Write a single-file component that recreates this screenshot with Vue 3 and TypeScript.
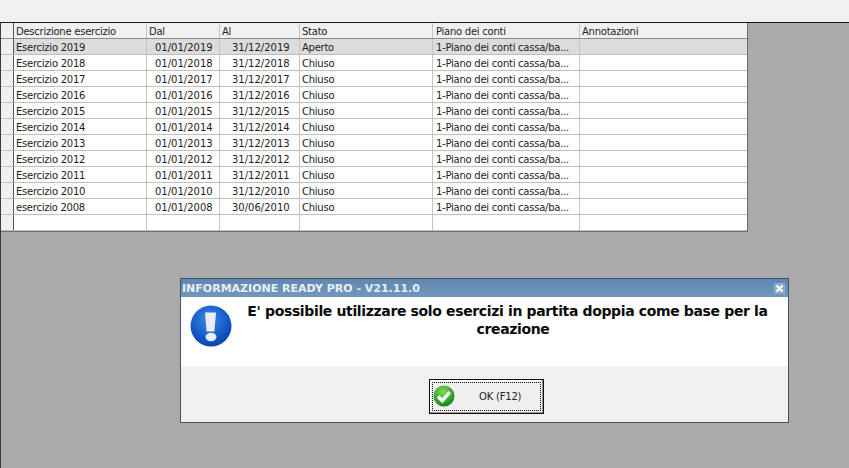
<script setup lang="ts">
interface Row { name: string; from: string; to: string; state: string; plan: string }
const years = [2019, 2018, 2017, 2016, 2015, 2014, 2013, 2012, 2011, 2010]
const plan = '1-Piano dei conti cassa/ba...'
const rows: Row[] = years.map((y, i) => ({
  name: `Esercizio ${y}`,
  from: `01/01/${y}`,
  to: `31/12/${y}`,
  state: i === 0 ? 'Aperto' : 'Chiuso',
  plan,
}))
rows.push({ name: 'esercizio 2008', from: '01/01/2008', to: '30/06/2010', state: 'Chiuso', plan })
rows.push({ name: '', from: '', to: '', state: '', plan: '' })
</script>

<template>
  <div class="page">
    <div class="topbar"></div>
    <div class="desk">
      <div class="grid">
        <div class="row head">
          <div class="ind"></div>
          <div class="c c1">Descrizione esercizio</div>
          <div class="c c2">Dal</div>
          <div class="c c3">Al</div>
          <div class="c c4">Stato</div>
          <div class="c c5">Piano dei conti</div>
          <div class="c c6">Annotazioni</div>
        </div>
        <div v-for="(r, i) in rows" :key="i" class="row" :class="{ sel: i === 0 }">
          <div class="ind"></div>
          <div class="c c1">{{ r.name }}</div>
          <div class="c c2 date">{{ r.from }}</div>
          <div class="c c3 date">{{ r.to }}</div>
          <div class="c c4">{{ r.state }}</div>
          <div class="c c5">{{ r.plan }}</div>
          <div class="c c6"></div>
        </div>
      </div>

      <div class="dialog">
        <div class="title">
          <span>INFORMAZIONE READY PRO - V21.11.0</span>
          <span class="close">
            <svg width="9" height="9" viewBox="0 0 9 9"><path d="M1.5 1.5l6 6M7.5 1.5l-6 6" stroke="#fff" stroke-width="2.2" fill="none" /></svg>
          </span>
        </div>
        <div class="body">
          <svg class="info" width="42" height="42" viewBox="0 0 42 42">
            <defs>
              <radialGradient id="blue" cx="45%" cy="35%" r="70%">
                <stop offset="0" stop-color="#3a8ae8" />
                <stop offset="0.7" stop-color="#0f55c4" />
                <stop offset="1" stop-color="#0a3f9c" />
              </radialGradient>
            </defs>
            <circle cx="21" cy="21" r="20.5" fill="url(#blue)" />
            <path d="M15 7.5h11l-1.6 19h-7.8z" fill="#e9eef8" />
            <ellipse cx="21" cy="32" rx="5.5" ry="4.2" fill="#e9eef8" />
          </svg>
          <div class="msg">
            <p class="line">E' possibile utilizzare solo esercizi in partita doppia come base per la</p>
            <p class="line second">creazione</p>
          </div>
        </div>
        <div class="foot">
          <button class="ok" type="button">
            <span class="focus">
              <svg class="check" width="22" height="22" viewBox="0 0 22 22">
                <defs>
                  <radialGradient id="green" cx="45%" cy="30%" r="75%">
                    <stop offset="0" stop-color="#7ed957" />
                    <stop offset="0.65" stop-color="#2fa32a" />
                    <stop offset="1" stop-color="#15761b" />
                  </radialGradient>
                </defs>
                <circle cx="11" cy="11" r="10.5" fill="url(#green)" />
                <path d="M5 11.5l4.2 4.2 7.5-8.5" stroke="#fff" stroke-width="3.4" fill="none" />
              </svg>
              <span class="oktext">OK (F12)</span>
            </span>
          </button>
        </div>
      </div>
    </div>
  </div>
</template>

<style>
html, body { margin: 0; padding: 0; background: #aaaaaa; }
</style>

<style scoped>
.page {
  width: 849px;
  height: 468px;
  overflow: hidden;
  display: flex;
  flex-direction: column;
  font-family: "DejaVu Sans", sans-serif;
  background: #aaaaaa;
}
.topbar { height: 22px; flex: none; background: #f0f0f0; }
.desk {
  position: relative;
  flex: 1;
  background: #aaaaaa;
  border-top: 1px solid #1a1a1a;
  border-left: 1px solid #3a3a3a;
}
.grid {
  width: 746px;
  border-right: 1px solid #6e6e6e;
  border-bottom: 1px solid #6e6e6e;
  background: #fff;
}
.row {
  display: flex;
  height: 16px;
  box-sizing: border-box;
  border-bottom: 1px solid #c0c0c0;
  font-size: 10px;
  line-height: 15px;
  color: #1c1c1c;
}
.row.head { background: #f0f0f0; border-bottom: 1px solid #8a8a8a; }
.row.sel { background: #dcdcdc; border-bottom-color: #bdbdbd; }
.ind {
  flex: none;
  width: 12px;
  background: #f0f0f0;
  border-right: 1px solid #555;
}
.c {
  flex: none;
  box-sizing: border-box;
  padding-left: 2px;
  padding-top: 1px;
  border-right: 1px solid #c4c4c4;
  white-space: nowrap;
  overflow: hidden;
  letter-spacing: -0.25px;
}
.c1 { width: 133px; }
.c2 { width: 73px; }
.c3 { width: 80px; }
.c4 { width: 133px; }
.c5 { width: 147px; padding-left: 3px; }
.c6 { width: 167px; border-right: none; }
.date { padding-left: 8px; letter-spacing: 0; }
.c3.date { padding-left: 12px; }
.dialog {
  position: absolute;
  left: 179px;
  top: 255px;
  width: 609px;
  height: 145px;
  box-sizing: border-box;
  border: 1px solid #3d5569;
  display: flex;
  flex-direction: column;
  background: #fff;
}
.title {
  height: 18px;
  flex: none;
  display: flex;
  align-items: center;
  justify-content: space-between;
  padding: 0 3px 0 1px;
  background: linear-gradient(#5f87b0, #7397bd);
  color: #e8eef5;
  font-size: 11px;
  font-weight: 700;
  white-space: nowrap;
}
.close {
  width: 11px;
  height: 11px;
  display: flex;
  align-items: center;
  justify-content: center;
  background: #8fabc9;
}
.body {
  flex: 1;
  display: flex;
  background: #fff;
  padding: 8px 0 0 9px;
}
.info { flex: none; }
.msg {
  flex: 1;
  margin-top: -3px;
  padding: 0 17px 0 12px;
  text-align: center;
  font-size: 14px;
  font-weight: 700;
  line-height: 18px;
  letter-spacing: -0.36px;
  color: #0a0a0a;
}
.line { margin: 0; white-space: nowrap; }
.second { padding-left: 11px; }
.foot {
  height: 56px;
  flex: none;
  display: flex;
  justify-content: center;
  align-items: flex-start;
  padding-top: 13px;
  box-sizing: border-box;
  background: #f0f0f0;
}
.ok {
  width: 115px;
  height: 35px;
  padding: 2px;
  box-sizing: border-box;
  border: 1px solid #111;
  background: #efefef;
  box-shadow: inset -1px -1px 0 #9a9a9a, inset 1px 1px 0 #fff;
  font: inherit;
  margin-left: 4px;
}
.focus {
  display: flex;
  align-items: center;
  height: 100%;
  box-sizing: border-box;
  border: 1px dotted #111;
}
.check { flex: none; margin: -2px 0 0; }
.oktext {
  margin-left: 24px;
  font-size: 10px;
  letter-spacing: -0.2px;
  color: #222;
}
</style>
